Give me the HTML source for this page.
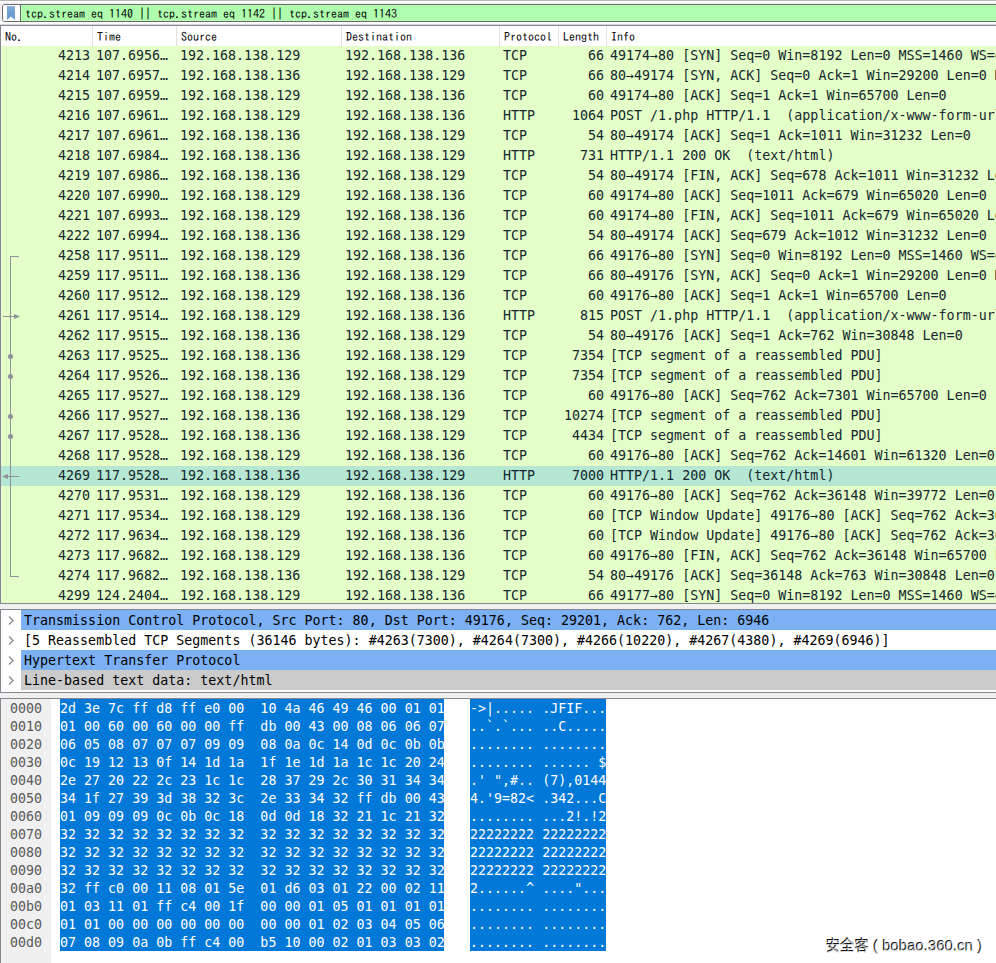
<!DOCTYPE html>
<html lang="en"><head><meta charset="utf-8"><title>Wireshark</title>
<style>
html,body{margin:0;padding:0;}
body{width:996px;height:963px;overflow:hidden;background:#f0f0f0;position:relative;font-family:"DejaVu Sans Mono","Liberation Mono",monospace;font-size:13.32px;color:#12272e;}
.abs{position:absolute;}
.topline{left:0;top:0;width:996px;height:1px;background:#b4b4b4;}
.l1{left:0;top:1px;width:996px;height:1px;background:#fff;}
.l2{left:0;top:2px;width:996px;height:1px;background:#f8f8f8;}
.l3{left:0;top:22px;width:996px;height:2px;background:#fcfcfc;}
.l4{left:0;top:24px;width:996px;height:1px;background:#d4d6d9;}
.filter{left:2px;top:4px;width:1000px;height:16px;border:1px solid #6a6a6a;border-radius:3px 0 0 3px;background:#fff;overflow:hidden;}
.filter .gr{position:absolute;left:18px;top:0;width:990px;height:16px;background:#afffaf;}
.filter .bm{position:absolute;left:0;top:0;width:17px;height:16px;background:#fff;border-right:1px solid #6a6a6a;}
.ui{font-family:"IPAGothic","Liberation Mono",monospace;font-size:12px;color:#000;white-space:pre;}
.ftext{left:22px;top:1px;line-height:14px;}
.list{left:0;top:25px;width:996px;height:577px;border-top:1px solid #828790;border-left:1px solid #828790;border-bottom:1px solid #828790;background:#fff;overflow:hidden;box-sizing:content-box;}
.hdr{left:0;top:0;width:996px;height:20px;background:#fff;}
.hdr span{position:absolute;top:3px;line-height:14px;}
.hdr i{position:absolute;top:0;width:1px;height:20px;background:#e0e0e0;}
.row{position:absolute;left:0;width:996px;height:20px;background:#e4ffc7;white-space:pre;line-height:19px;}
.row span{position:absolute;top:0;}
.row.sel{background:#b5e7d3;}
.det{left:0;top:609px;width:996px;height:82px;border-top:1px solid #828790;border-left:1px solid #828790;border-bottom:1px solid #828790;background:#fff;overflow:hidden;}
.drow{position:absolute;left:20px;width:980px;height:20px;white-space:pre;line-height:19px;color:#000;}
.drow span{position:absolute;left:3px;top:1px;}
.hex{left:0;top:698px;width:996px;height:270px;border-top:1px solid #828790;border-left:1px solid #828790;background:#fff;overflow:hidden;}
.hex .off{position:absolute;left:0;top:0;width:50px;height:270px;background:#f0f0f0;}
.hrow{position:absolute;left:0;height:18px;width:996px;white-space:pre;line-height:18px;}
.hrow span{position:absolute;top:0;height:18px;}
.hrow .o{left:9px;top:1px;color:#5a5a5a;}
.hrow .h{left:59px;width:384px;background:#0078d7;color:#fff;}
.hrow .a{left:469px;width:136px;background:#0078d7;color:#fff;}
.hrow .h b,.hrow .a b{font-weight:normal;position:absolute;left:0px;top:1px;}
.wm{right:13px;top:936px;font-family:"Liberation Sans","Noto Sans CJK SC",sans-serif;font-size:14.4px;line-height:20px;color:rgba(255,255,255,.62);white-space:pre;text-shadow:-1px -1px 0 #111,-1px 0 0 rgba(0,0,0,.35);}
.wm span{font-size:15px;}
</style></head><body>

<div class="abs topline"></div><div class="abs l1"></div><div class="abs l2"></div><div class="abs l3"></div><div class="abs l4"></div>
<div class="abs filter"><div class="bm"><svg width="17" height="16" viewBox="0 0 17 16" style="position:absolute;left:0;top:0"><defs><linearGradient id="bg" x1="0" y1="0" x2="0" y2="1"><stop offset="0" stop-color="#8db1dc"/><stop offset="0.4" stop-color="#6f9fd3"/><stop offset="1" stop-color="#6a9bd1"/></linearGradient></defs><path d="M4 1 H12 V15 L8 11.5 L4 15 Z" fill="url(#bg)"/></svg></div><div class="gr"></div><div class="abs ui ftext">tcp.stream eq 1140 || tcp.stream eq 1142 || tcp.stream eq 1143</div></div>
<div class="abs list">
<div class="abs hdr ui">
<span style="left:4px">No.</span>
<span style="left:96px">Time</span>
<span style="left:180px">Source</span>
<span style="left:345px">Destination</span>
<span style="left:503px">Protocol</span>
<span style="left:562px">Length</span>
<span style="left:610px">Info</span>
<i style="left:91px"></i>
<i style="left:175px"></i>
<i style="left:340px"></i>
<i style="left:498px"></i>
<i style="left:557px"></i>
<i style="left:605px"></i>
</div>
<div class="row" style="top:20px"><span style="right:907px">4213</span><span style="left:95px">107.6956…</span><span style="left:179px">192.168.138.129</span><span style="left:344px">192.168.138.136</span><span style="left:502px">TCP</span><span style="right:393px">66</span><span style="left:609px">49174→80 [SYN] Seq=0 Win=8192 Len=0 MSS=1460 WS=4 SACK_PERM=1</span></div>
<div class="row" style="top:40px"><span style="right:907px">4214</span><span style="left:95px">107.6957…</span><span style="left:179px">192.168.138.136</span><span style="left:344px">192.168.138.129</span><span style="left:502px">TCP</span><span style="right:393px">66</span><span style="left:609px">80→49174 [SYN, ACK] Seq=0 Ack=1 Win=29200 Len=0 MSS=1460 SACK_PERM=1 WS=128</span></div>
<div class="row" style="top:60px"><span style="right:907px">4215</span><span style="left:95px">107.6959…</span><span style="left:179px">192.168.138.129</span><span style="left:344px">192.168.138.136</span><span style="left:502px">TCP</span><span style="right:393px">60</span><span style="left:609px">49174→80 [ACK] Seq=1 Ack=1 Win=65700 Len=0</span></div>
<div class="row" style="top:80px"><span style="right:907px">4216</span><span style="left:95px">107.6961…</span><span style="left:179px">192.168.138.129</span><span style="left:344px">192.168.138.136</span><span style="left:502px">HTTP</span><span style="right:393px">1064</span><span style="left:609px">POST /1.php HTTP/1.1  (application/x-www-form-urlencoded)</span></div>
<div class="row" style="top:100px"><span style="right:907px">4217</span><span style="left:95px">107.6961…</span><span style="left:179px">192.168.138.136</span><span style="left:344px">192.168.138.129</span><span style="left:502px">TCP</span><span style="right:393px">54</span><span style="left:609px">80→49174 [ACK] Seq=1 Ack=1011 Win=31232 Len=0</span></div>
<div class="row" style="top:120px"><span style="right:907px">4218</span><span style="left:95px">107.6984…</span><span style="left:179px">192.168.138.136</span><span style="left:344px">192.168.138.129</span><span style="left:502px">HTTP</span><span style="right:393px">731</span><span style="left:609px">HTTP/1.1 200 OK  (text/html)</span></div>
<div class="row" style="top:140px"><span style="right:907px">4219</span><span style="left:95px">107.6986…</span><span style="left:179px">192.168.138.136</span><span style="left:344px">192.168.138.129</span><span style="left:502px">TCP</span><span style="right:393px">54</span><span style="left:609px">80→49174 [FIN, ACK] Seq=678 Ack=1011 Win=31232 Len=0</span></div>
<div class="row" style="top:160px"><span style="right:907px">4220</span><span style="left:95px">107.6990…</span><span style="left:179px">192.168.138.129</span><span style="left:344px">192.168.138.136</span><span style="left:502px">TCP</span><span style="right:393px">60</span><span style="left:609px">49174→80 [ACK] Seq=1011 Ack=679 Win=65020 Len=0</span></div>
<div class="row" style="top:180px"><span style="right:907px">4221</span><span style="left:95px">107.6993…</span><span style="left:179px">192.168.138.129</span><span style="left:344px">192.168.138.136</span><span style="left:502px">TCP</span><span style="right:393px">60</span><span style="left:609px">49174→80 [FIN, ACK] Seq=1011 Ack=679 Win=65020 Len=0</span></div>
<div class="row" style="top:200px"><span style="right:907px">4222</span><span style="left:95px">107.6994…</span><span style="left:179px">192.168.138.136</span><span style="left:344px">192.168.138.129</span><span style="left:502px">TCP</span><span style="right:393px">54</span><span style="left:609px">80→49174 [ACK] Seq=679 Ack=1012 Win=31232 Len=0</span></div>
<div class="row" style="top:220px"><span style="right:907px">4258</span><span style="left:95px">117.9511…</span><span style="left:179px">192.168.138.129</span><span style="left:344px">192.168.138.136</span><span style="left:502px">TCP</span><span style="right:393px">66</span><span style="left:609px">49176→80 [SYN] Seq=0 Win=8192 Len=0 MSS=1460 WS=4 SACK_PERM=1</span></div>
<div class="row" style="top:240px"><span style="right:907px">4259</span><span style="left:95px">117.9511…</span><span style="left:179px">192.168.138.136</span><span style="left:344px">192.168.138.129</span><span style="left:502px">TCP</span><span style="right:393px">66</span><span style="left:609px">80→49176 [SYN, ACK] Seq=0 Ack=1 Win=29200 Len=0 MSS=1460 SACK_PERM=1 WS=128</span></div>
<div class="row" style="top:260px"><span style="right:907px">4260</span><span style="left:95px">117.9512…</span><span style="left:179px">192.168.138.129</span><span style="left:344px">192.168.138.136</span><span style="left:502px">TCP</span><span style="right:393px">60</span><span style="left:609px">49176→80 [ACK] Seq=1 Ack=1 Win=65700 Len=0</span></div>
<div class="row" style="top:280px"><span style="right:907px">4261</span><span style="left:95px">117.9514…</span><span style="left:179px">192.168.138.129</span><span style="left:344px">192.168.138.136</span><span style="left:502px">HTTP</span><span style="right:393px">815</span><span style="left:609px">POST /1.php HTTP/1.1  (application/x-www-form-urlencoded)</span></div>
<div class="row" style="top:300px"><span style="right:907px">4262</span><span style="left:95px">117.9515…</span><span style="left:179px">192.168.138.136</span><span style="left:344px">192.168.138.129</span><span style="left:502px">TCP</span><span style="right:393px">54</span><span style="left:609px">80→49176 [ACK] Seq=1 Ack=762 Win=30848 Len=0</span></div>
<div class="row" style="top:320px"><span style="right:907px">4263</span><span style="left:95px">117.9525…</span><span style="left:179px">192.168.138.136</span><span style="left:344px">192.168.138.129</span><span style="left:502px">TCP</span><span style="right:393px">7354</span><span style="left:609px">[TCP segment of a reassembled PDU]</span></div>
<div class="row" style="top:340px"><span style="right:907px">4264</span><span style="left:95px">117.9526…</span><span style="left:179px">192.168.138.136</span><span style="left:344px">192.168.138.129</span><span style="left:502px">TCP</span><span style="right:393px">7354</span><span style="left:609px">[TCP segment of a reassembled PDU]</span></div>
<div class="row" style="top:360px"><span style="right:907px">4265</span><span style="left:95px">117.9527…</span><span style="left:179px">192.168.138.129</span><span style="left:344px">192.168.138.136</span><span style="left:502px">TCP</span><span style="right:393px">60</span><span style="left:609px">49176→80 [ACK] Seq=762 Ack=7301 Win=65700 Len=0</span></div>
<div class="row" style="top:380px"><span style="right:907px">4266</span><span style="left:95px">117.9527…</span><span style="left:179px">192.168.138.136</span><span style="left:344px">192.168.138.129</span><span style="left:502px">TCP</span><span style="right:393px">10274</span><span style="left:609px">[TCP segment of a reassembled PDU]</span></div>
<div class="row" style="top:400px"><span style="right:907px">4267</span><span style="left:95px">117.9528…</span><span style="left:179px">192.168.138.136</span><span style="left:344px">192.168.138.129</span><span style="left:502px">TCP</span><span style="right:393px">4434</span><span style="left:609px">[TCP segment of a reassembled PDU]</span></div>
<div class="row" style="top:420px"><span style="right:907px">4268</span><span style="left:95px">117.9528…</span><span style="left:179px">192.168.138.129</span><span style="left:344px">192.168.138.136</span><span style="left:502px">TCP</span><span style="right:393px">60</span><span style="left:609px">49176→80 [ACK] Seq=762 Ack=14601 Win=61320 Len=0</span></div>
<div class="row sel" style="top:440px"><span style="right:907px">4269</span><span style="left:95px">117.9528…</span><span style="left:179px">192.168.138.136</span><span style="left:344px">192.168.138.129</span><span style="left:502px">HTTP</span><span style="right:393px">7000</span><span style="left:609px">HTTP/1.1 200 OK  (text/html)</span></div>
<div class="row" style="top:460px"><span style="right:907px">4270</span><span style="left:95px">117.9531…</span><span style="left:179px">192.168.138.129</span><span style="left:344px">192.168.138.136</span><span style="left:502px">TCP</span><span style="right:393px">60</span><span style="left:609px">49176→80 [ACK] Seq=762 Ack=36148 Win=39772 Len=0</span></div>
<div class="row" style="top:480px"><span style="right:907px">4271</span><span style="left:95px">117.9534…</span><span style="left:179px">192.168.138.129</span><span style="left:344px">192.168.138.136</span><span style="left:502px">TCP</span><span style="right:393px">60</span><span style="left:609px">[TCP Window Update] 49176→80 [ACK] Seq=762 Ack=36148 Win=65700 Len=0</span></div>
<div class="row" style="top:500px"><span style="right:907px">4272</span><span style="left:95px">117.9634…</span><span style="left:179px">192.168.138.129</span><span style="left:344px">192.168.138.136</span><span style="left:502px">TCP</span><span style="right:393px">60</span><span style="left:609px">[TCP Window Update] 49176→80 [ACK] Seq=762 Ack=36148 Win=65700 Len=0</span></div>
<div class="row" style="top:520px"><span style="right:907px">4273</span><span style="left:95px">117.9682…</span><span style="left:179px">192.168.138.129</span><span style="left:344px">192.168.138.136</span><span style="left:502px">TCP</span><span style="right:393px">60</span><span style="left:609px">49176→80 [FIN, ACK] Seq=762 Ack=36148 Win=65700 Len=0</span></div>
<div class="row" style="top:540px"><span style="right:907px">4274</span><span style="left:95px">117.9682…</span><span style="left:179px">192.168.138.136</span><span style="left:344px">192.168.138.129</span><span style="left:502px">TCP</span><span style="right:393px">54</span><span style="left:609px">80→49176 [ACK] Seq=36148 Ack=763 Win=30848 Len=0</span></div>
<div class="row" style="top:560px"><span style="right:907px">4299</span><span style="left:95px">124.2404…</span><span style="left:179px">192.168.138.129</span><span style="left:344px">192.168.138.136</span><span style="left:502px">TCP</span><span style="right:393px">66</span><span style="left:609px">49177→80 [SYN] Seq=0 Win=8192 Len=0 MSS=1460 WS=4 SACK_PERM=1</span></div>
<svg class="abs" style="left:0;top:0" width="60" height="580" viewBox="0 0 60 580"><g fill="#8d929c">
<rect x="9" y="230" width="9" height="1"/><rect x="9" y="230" width="1" height="321"/><rect x="9" y="550" width="9" height="1"/>
<rect x="2" y="290" width="12" height="1"/><path d="M13 288 V293 L19 290.5 Z"/>
<rect x="6" y="450" width="12" height="1"/><path d="M1 450.5 L7 448 V453 Z"/>
<circle cx="9.5" cy="330.5" r="2.5"/><circle cx="9.5" cy="350.5" r="2.5"/><circle cx="9.5" cy="390.5" r="2.5"/><circle cx="9.5" cy="410.5" r="2.5"/></g></svg>
</div>
<div class="abs det">
<svg class="abs" style="left:5px;top:4px" width="10" height="12" viewBox="0 0 10 12"><path d="M3 2.5 L7 6.5 L3 10.5" fill="none" stroke="#999" stroke-width="1.7"/></svg>
<div class="drow" style="top:0px;background:#7cb0f5"><span>Transmission Control Protocol, Src Port: 80, Dst Port: 49176, Seq: 29201, Ack: 762, Len: 6946</span></div>
<svg class="abs" style="left:5px;top:24px" width="10" height="12" viewBox="0 0 10 12"><path d="M3 2.5 L7 6.5 L3 10.5" fill="none" stroke="#999" stroke-width="1.7"/></svg>
<div class="drow" style="top:20px;background:#ffffff"><span>[5 Reassembled TCP Segments (36146 bytes): #4263(7300), #4264(7300), #4266(10220), #4267(4380), #4269(6946)]</span></div>
<svg class="abs" style="left:5px;top:44px" width="10" height="12" viewBox="0 0 10 12"><path d="M3 2.5 L7 6.5 L3 10.5" fill="none" stroke="#999" stroke-width="1.7"/></svg>
<div class="drow" style="top:40px;background:#7cb0f5"><span>Hypertext Transfer Protocol</span></div>
<svg class="abs" style="left:5px;top:64px" width="10" height="12" viewBox="0 0 10 12"><path d="M3 2.5 L7 6.5 L3 10.5" fill="none" stroke="#999" stroke-width="1.7"/></svg>
<div class="drow" style="top:60px;background:#cbcbcb"><span>Line-based text data: text/html</span></div>
</div>
<div class="abs hex"><div class="off"></div>
<div class="hrow" style="top:0px"><span class="o">0000</span><span class="h"><b>2d 3e 7c ff d8 ff e0 00  10 4a 46 49 46 00 01 01</b></span><span class="a"><b>-&gt;|..... .JFIF...</b></span></div>
<div class="hrow" style="top:18px"><span class="o">0010</span><span class="h"><b>01 00 60 00 60 00 00 ff  db 00 43 00 08 06 06 07</b></span><span class="a"><b>..`.`... ..C.....</b></span></div>
<div class="hrow" style="top:36px"><span class="o">0020</span><span class="h"><b>06 05 08 07 07 07 09 09  08 0a 0c 14 0d 0c 0b 0b</b></span><span class="a"><b>........ ........</b></span></div>
<div class="hrow" style="top:54px"><span class="o">0030</span><span class="h"><b>0c 19 12 13 0f 14 1d 1a  1f 1e 1d 1a 1c 1c 20 24</b></span><span class="a"><b>........ ...... $</b></span></div>
<div class="hrow" style="top:72px"><span class="o">0040</span><span class="h"><b>2e 27 20 22 2c 23 1c 1c  28 37 29 2c 30 31 34 34</b></span><span class="a"><b>.&#x27; &quot;,#.. (7),0144</b></span></div>
<div class="hrow" style="top:90px"><span class="o">0050</span><span class="h"><b>34 1f 27 39 3d 38 32 3c  2e 33 34 32 ff db 00 43</b></span><span class="a"><b>4.&#x27;9=82&lt; .342...C</b></span></div>
<div class="hrow" style="top:108px"><span class="o">0060</span><span class="h"><b>01 09 09 09 0c 0b 0c 18  0d 0d 18 32 21 1c 21 32</b></span><span class="a"><b>........ ...2!.!2</b></span></div>
<div class="hrow" style="top:126px"><span class="o">0070</span><span class="h"><b>32 32 32 32 32 32 32 32  32 32 32 32 32 32 32 32</b></span><span class="a"><b>22222222 22222222</b></span></div>
<div class="hrow" style="top:144px"><span class="o">0080</span><span class="h"><b>32 32 32 32 32 32 32 32  32 32 32 32 32 32 32 32</b></span><span class="a"><b>22222222 22222222</b></span></div>
<div class="hrow" style="top:162px"><span class="o">0090</span><span class="h"><b>32 32 32 32 32 32 32 32  32 32 32 32 32 32 32 32</b></span><span class="a"><b>22222222 22222222</b></span></div>
<div class="hrow" style="top:180px"><span class="o">00a0</span><span class="h"><b>32 ff c0 00 11 08 01 5e  01 d6 03 01 22 00 02 11</b></span><span class="a"><b>2......^ ....&quot;...</b></span></div>
<div class="hrow" style="top:198px"><span class="o">00b0</span><span class="h"><b>01 03 11 01 ff c4 00 1f  00 00 01 05 01 01 01 01</b></span><span class="a"><b>........ ........</b></span></div>
<div class="hrow" style="top:216px"><span class="o">00c0</span><span class="h"><b>01 01 00 00 00 00 00 00  00 00 01 02 03 04 05 06</b></span><span class="a"><b>........ ........</b></span></div>
<div class="hrow" style="top:234px"><span class="o">00d0</span><span class="h"><b>07 08 09 0a 0b ff c4 00  b5 10 00 02 01 03 03 02</b></span><span class="a"><b>........ ........</b></span></div>
</div>
<div class="abs wm">安全客<span> ( bobao.360.cn )</span></div>
</body></html>
